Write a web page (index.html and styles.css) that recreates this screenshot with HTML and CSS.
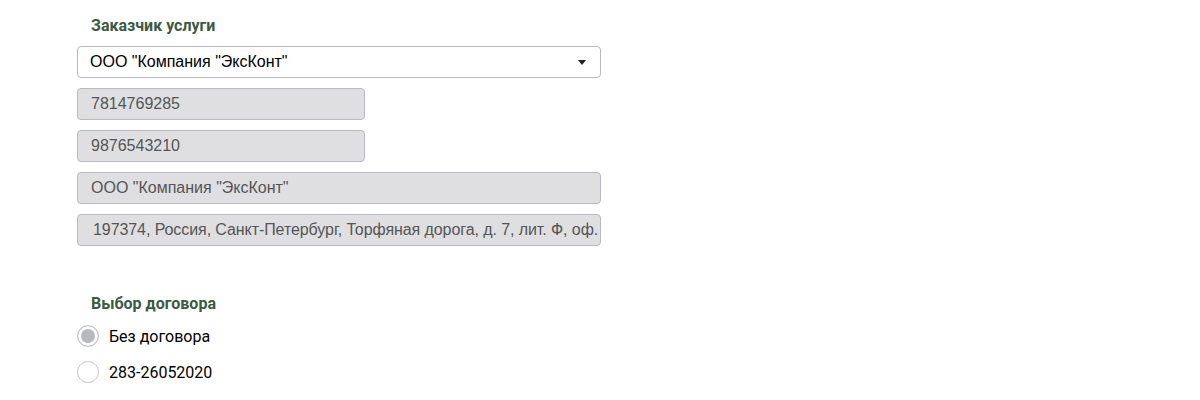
FILE: index.html
```html
<!DOCTYPE html>
<html lang="ru">
<head>
    <meta charset="UTF-8">
    <meta name="viewport" content="width=device-width, initial-scale=1.0">
    <title>Заказчик услуги</title>
    <link rel="stylesheet" href="styles.css">
</head>
<body>
    <div class="page">
        <section class="group">
            <h3 class="group-title">Заказчик услуги</h3>
            <div class="select">
                <span>ООО "Компания "ЭксКонт"</span>
                <span class="caret"></span>
            </div>
            <input class="field short" type="text" value="7814769285" disabled>
            <input class="field short" type="text" value="9876543210" disabled>
            <input class="field" type="text" value="ООО &quot;Компания &quot;ЭксКонт&quot;" disabled>
            <input class="field address" type="text" value="197374, Россия, Санкт-Петербург, Торфяная дорога, д. 7, лит. Ф, оф. 505" disabled>
        </section>

        <section class="group contracts">
            <h3 class="group-title">Выбор договора</h3>
            <label class="radio">
                <span class="radio-mark checked"></span>
                Без договора
            </label>
            <label class="radio">
                <span class="radio-mark"></span>
                283-26052020
            </label>
        </section>
    </div>
</body>
</html>
```

FILE: styles.css
```css
body {
    margin: 0;
    background-color: #fff;
    font-family: "Liberation Sans", Arial, sans-serif;
}
.page {
    padding: 16px 0 0 77px;
    width: 524px;
}
.group {
    display: flex;
    flex-direction: column;
    gap: 10px;
}
.group-title {
    margin: 0 0 0 14px;
    font-family: Roboto, sans-serif;
    font-size: 16px;
    font-weight: bold;
    line-height: 20px;
    color: #3b5a43;
}
.select {
    display: flex;
    align-items: center;
    justify-content: space-between;
    height: 32px;
    box-sizing: border-box;
    padding: 0 14px 0 12px;
    border: 1px solid #b9b9c2;
    border-radius: 4px;
    font-size: 16px;
    color: #000;
}
.caret {
    width: 0;
    height: 0;
    border-left: 4px solid transparent;
    border-right: 4px solid transparent;
    border-top: 5px solid #222;
}
.field {
    height: 32px;
    box-sizing: border-box;
    padding: 0 13px;
    border: 1px solid #b9b9c2;
    border-radius: 4px;
    background-color: #dfdfe2;
    font-family: "Liberation Sans", Arial, sans-serif;
    font-size: 16px;
    color: #555;
}
.field.short {
    width: 288px;
}
.address {
    padding: 0 1px 0 15px;
    letter-spacing: -0.08px;
}
.contracts {
    margin-top: 48px;
    gap: 0;
}
.contracts .group-title {
    margin-bottom: 4px;
}
.radio {
    display: flex;
    align-items: center;
    gap: 10px;
    height: 36px;
    font-family: Roboto, sans-serif;
    font-size: 16px;
    color: #000;
}
.radio-mark {
    width: 22px;
    height: 22px;
    box-sizing: border-box;
    border: 1px solid #c4c4cc;
    border-radius: 50%;
    background-color: #fff;
}
.radio-mark.checked {
    background-color: #b8b8c2;
    box-shadow: inset 0 0 0 3px #fff;
}
```
